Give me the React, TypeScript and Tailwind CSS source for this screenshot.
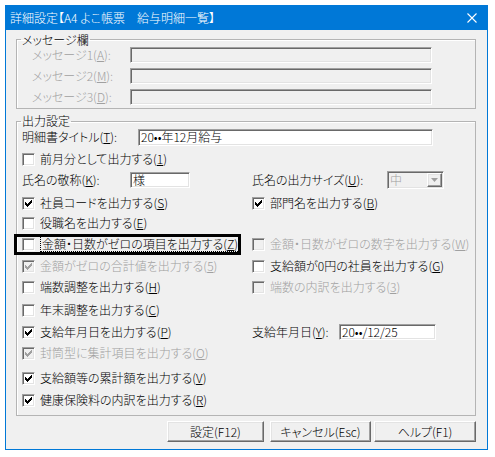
import type { ReactNode } from "react";

// classic 7x7 check glyph
const TICK = ["......x", ".....xx", "x...xxx", "xx.xxx.", "xxxxx..", ".xxx...", "..x...."];

const sunken =
  "border border-t-[#a0a0a0] border-l-[#a0a0a0] border-r-white border-b-white shadow-[inset_1px_1px_0_#696969,inset_-1px_-1px_0_#e3e3e3]";
const raised =
  "border border-t-white border-l-white border-r-[#696969] border-b-[#696969] shadow-[inset_-1px_-1px_0_#a0a0a0,inset_1px_1px_0_#e3e3e3]";

function Tick({ color }: { color: string }) {
  return (
    <svg width="7" height="7" viewBox="0 0 7 7" shapeRendering="crispEdges">
      {TICK.flatMap((row, y) =>
        row
          .split("")
          .map((c, x) =>
            c === "x" ? <rect key={`${x}-${y}`} x={x} y={y} width="1" height="1" fill={color} /> : null
          )
      )}
    </svg>
  );
}

function Box({ checked, disabled }: { checked?: boolean; disabled?: boolean }) {
  return (
    <span
      className={`flex h-[13px] w-[13px] shrink-0 items-center justify-center ${sunken} ${
        disabled ? "bg-[#f0f0f0]" : "bg-white"
      }`}
    >
      {checked && <Tick color={disabled ? "#a0a0a0" : "#000000"} />}
    </span>
  );
}

function Key({ t, k, end = ")" }: { t: string; k: string; end?: string }) {
  return (
    <>
      {t}(<span className="underline underline-offset-[1px]">{k}</span>
      {end}
    </>
  );
}

function Check({
  t,
  k,
  checked,
  disabled,
  focused,
}: {
  t: string;
  k: string;
  checked?: boolean;
  disabled?: boolean;
  focused?: boolean;
}) {
  return (
    <div className={`flex items-center gap-[5px] ${disabled ? "text-[#a0a0a0]" : "text-black"}`}>
      <Box checked={checked} disabled={disabled} />
      <span className={focused ? "border border-dotted border-black px-px leading-[14px]" : "leading-[14px]"}>
        <Key t={t} k={k} />
      </span>
    </div>
  );
}

function Row({ className = "", children }: { className?: string; children: ReactNode }) {
  return <div className={`relative grid h-[20px] grid-cols-[230px_1fr] items-center ${className}`}>{children}</div>;
}

function Button({ w, children }: { w: string; children: ReactNode }) {
  return (
    <button className={`flex h-[21px] items-center justify-center bg-[#f0f0f0] text-black ${raised} ${w}`}>
      {children}
    </button>
  );
}

export default function App() {
  return (
    <div className="h-[457px] w-[495px] bg-white pl-[5px] pt-[5px] font-['Noto_Sans_CJK_JP',sans-serif] text-[12px] font-light leading-[14px] [font-feature-settings:'palt']">
      <div className="flex h-[445px] w-[483px] flex-col bg-[#0078d7] px-px pb-px">
        <div className="flex h-[25px] shrink-0 items-center justify-between pl-[4px] pr-[10px] text-white">
          <span>詳細設定【A4 よこ帳票　給与明細一覧】</span>
          <svg width="10" height="10" viewBox="0 0 10 10" className="mt-px">
            <path d="M0.5 0.5 L9.5 9.5 M9.5 0.5 L0.5 9.5" stroke="#ffffff" strokeWidth="1.1" />
          </svg>
        </div>

        <div className="flex flex-1 flex-col bg-[#f0f0f0] px-[10px]">
          <fieldset className="mt-[3px] w-[460px] border border-[#b4b4b4] shadow-[inset_1px_1px_0_#ffffff]">
            <legend className="ml-[4px] px-px leading-[13px] text-black">メッセージ欄</legend>
            <div className="flex flex-col gap-[5px] pb-[3px] pl-[15px] pt-px text-[#a0a0a0]">
              {[
                ["メッセージ1", "A"],
                ["メッセージ2", "M"],
                ["メッセージ3", "D"],
              ].map(([t, k]) => (
                <div key={k} className="flex h-[16px] items-center">
                  <span className="w-[98px]">
                    <Key t={t} k={k} end="):" />
                  </span>
                  <span className={`h-[16px] w-[302px] bg-[#f0f0f0] ${sunken}`} />
                </div>
              ))}
            </div>
          </fieldset>

          <fieldset className="mt-[5px] w-[460px] border border-[#b4b4b4] shadow-[inset_1px_1px_0_#ffffff]">
            <legend className="ml-[4px] px-px leading-[14px] text-black">出力設定</legend>
            <div className="flex flex-col pb-[5px] pl-[5px]">
              <div className="flex h-[18px] items-center">
                <span className="w-[116px]">
                  <Key t="明細書タイトル" k="T" end="):" />
                </span>
                <span className={`flex h-[17px] w-[295px] items-center bg-white pl-[2px] ${sunken}`}>
                  20••年12月給与
                </span>
              </div>

              <Row className="mt-[3px]">
                <Check t="前月分として出力する" k="1" />
              </Row>

              <Row className="mt-px">
                <div className="flex items-center">
                  <span className="w-[108px]">
                    <Key t="氏名の敬称" k="K" end="):" />
                  </span>
                  <span className={`flex h-[16px] w-[60px] items-center bg-white pl-[2px] ${sunken}`}>様</span>
                </div>
                <div className="flex items-center">
                  <span className="w-[135px]">
                    <Key t="氏名の出力サイズ" k="U" end="):" />
                  </span>
                  <span className={`flex h-[18px] w-[57px] items-center justify-between bg-[#f0f0f0] pl-[2px] text-[#a0a0a0] ${sunken}`}>
                    中
                    <span className={`mr-px flex h-[14px] w-[15px] items-center justify-center ${raised}`}>
                      <svg width="7" height="4" viewBox="0 0 7 4">
                        <path d="M0 0 H7 L3.5 4 Z" fill="#a0a0a0" />
                      </svg>
                    </span>
                  </span>
                </div>
              </Row>

              <Row className="mt-[3px]">
                <Check t="社員コードを出力する" k="S" checked />
                <Check t="部門名を出力する" k="B" checked />
              </Row>

              <Row>
                <Check t="役職名を出力する" k="E" />
              </Row>

              <Row className="mt-px">
                <Check t="金額・日数がゼロの項目を出力する" k="Z" focused />
                <Check t="金額・日数がゼロの数字を出力する" k="W" disabled />
                <span className="pointer-events-none absolute -left-[8px] top-0 h-[21px] w-[227px] border-[3px] border-black" />
              </Row>

              <Row className="mt-[2px]">
                <Check t="金額がゼロの合計値を出力する" k="5" checked disabled />
                <Check t="支給額が0円の社員を出力する" k="G" />
              </Row>

              <Row className="mt-px">
                <Check t="端数調整を出力する" k="H" />
                <Check t="端数の内訳を出力する" k="3" disabled />
              </Row>

              <Row className="mt-[3px]">
                <Check t="年末調整を出力する" k="C" />
              </Row>

              <Row className="mt-[2px]">
                <Check t="支給年月日を出力する" k="P" checked />
                <div className="flex items-center">
                  <span className="w-[87px]">
                    <Key t="支給年月日" k="Y" end="):" />
                  </span>
                  <span className={`flex h-[16px] w-[97px] items-center bg-white pl-[2px] ${sunken}`}>
                    20••/12/25
                  </span>
                </div>
              </Row>

              <Row className="mt-px">
                <Check t="封筒型に集計項目を出力する" k="O" checked disabled />
              </Row>

              <Row className="mt-[5px]">
                <Check t="支給額等の累計額を出力する" k="V" checked />
              </Row>

              <Row className="mt-[2px]">
                <Check t="健康保険料の内訳を出力する" k="R" checked />
              </Row>
            </div>
          </fieldset>

          <div className="mt-[5px] flex w-[460px] justify-end">
            <Button w="w-[97px]">設定(F12)</Button>
            <span className="w-[6px]" />
            <Button w="w-[101px]">キャンセル(Esc)</Button>
            <span className="w-[3px]" />
            <Button w="w-[102px]">ヘルプ(F1)</Button>
          </div>
        </div>
      </div>
    </div>
  );
}
